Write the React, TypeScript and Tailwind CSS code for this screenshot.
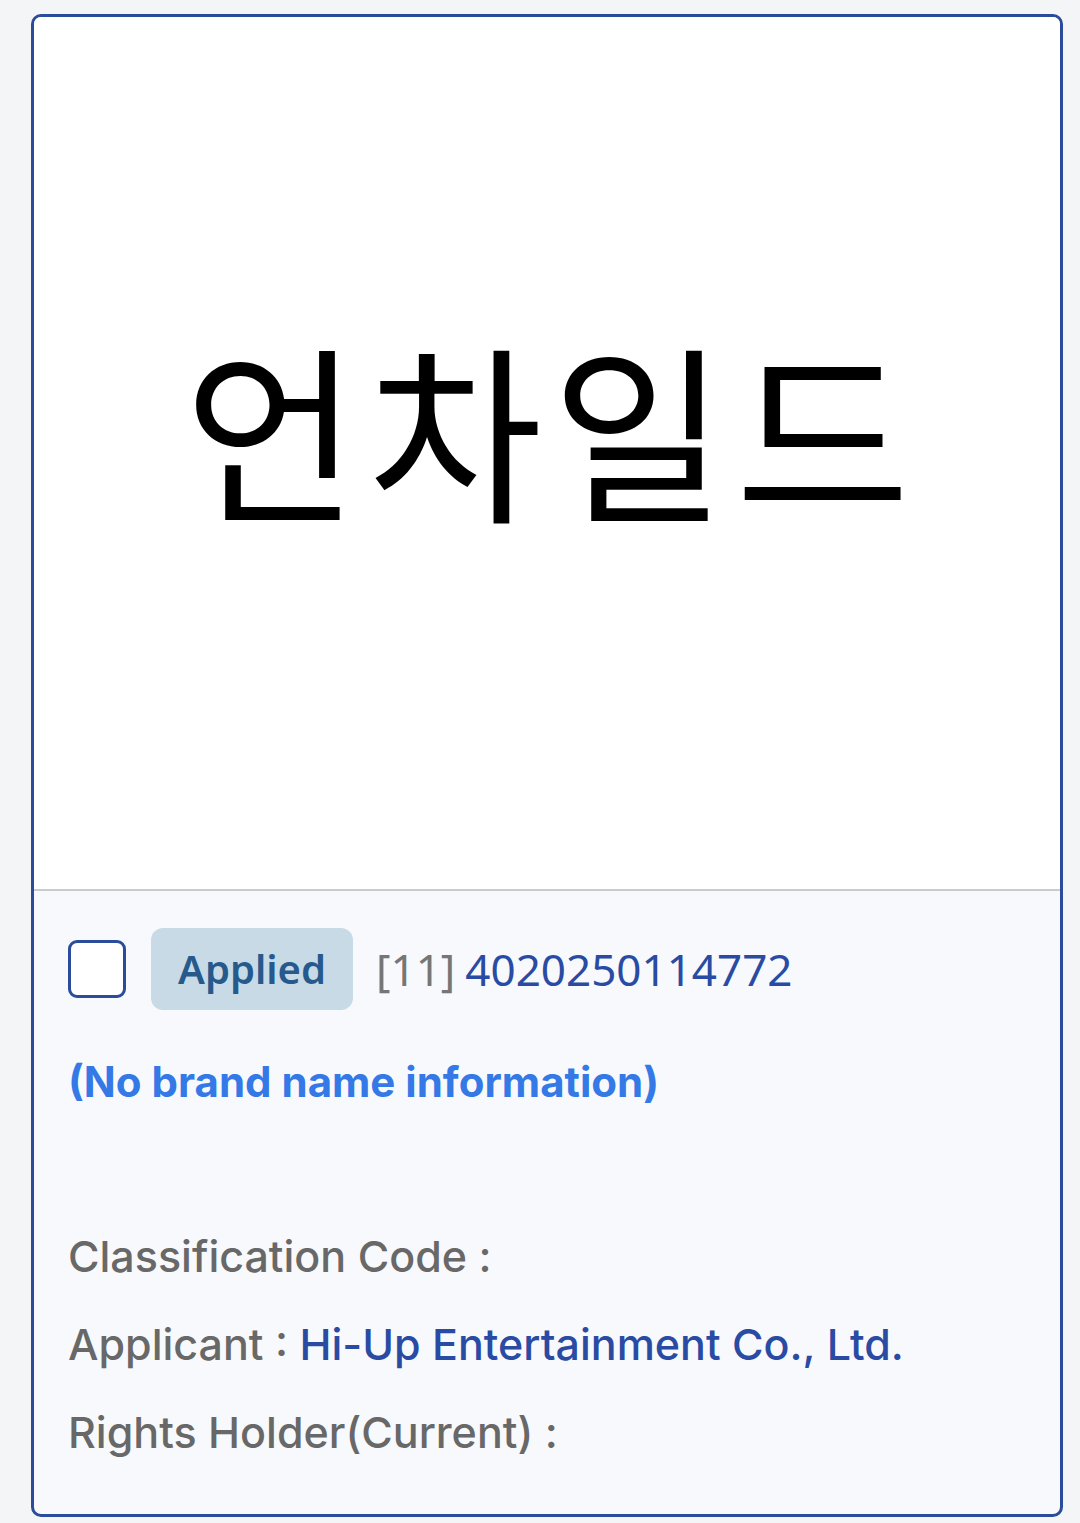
import React from "react";

export default function App() {
  return (
    <div className="min-h-[1523px] w-[1080px] bg-[#f4f5f6] pt-[14px]">
      <div className="ml-[31px] w-[1032px] h-[1503px] rounded-[10px] border-[3px] border-[#2b4c9b] overflow-hidden flex flex-col bg-[#f7f9fc]">
        <div className="h-[874px] bg-white flex items-center justify-center border-b-2 border-[#c9cbce]">
          <span
            className="text-[190px] leading-none text-black tracking-[9px] pl-[9px] -mt-[54px]"
            style={{ fontFamily: '"Noto Sans CJK KR", sans-serif' }}
          >
            언차일드
          </span>
        </div>
        <div
          className="flex flex-col px-[34px] pt-[37px]"
          style={{ fontFamily: 'Inter, "Noto Sans", sans-serif' }}
        >
          <div className="flex items-center h-[82px]">
            <div className="w-[58px] h-[58px] rounded-[9px] border-[3px] border-[#2b4c9b] bg-white" />
            <div
              className="ml-[25px] h-[82px] px-[27px] rounded-[12px] bg-[#c9dae7] flex items-center text-[40px] font-semibold text-[#275a8c]"
              style={{ fontFamily: '"Noto Sans", sans-serif' }}
            >
              Applied
            </div>
            <div
              className="ml-[23px] text-[44px] flex items-center gap-[10px]"
              style={{ fontFamily: '"Noto Sans", sans-serif' }}
            >
              <span className="text-[#767676]">[11]</span>
              <span className="text-[#2a4ba3]">4020250114772</span>
            </div>
          </div>
          <div className="mt-[42px] leading-[60px] text-[42px] font-bold text-[#3479e6]">
            (No brand name information)
          </div>
          <div className="mt-[100px] flex flex-col text-[43px] font-medium text-[#686868]">
            <div className="leading-[88px]">Classification Code :</div>
            <div className="leading-[88px]">
              Applicant : <span className="text-[#2a4ba3]">Hi-Up Entertainment Co., Ltd.</span>
            </div>
            <div className="leading-[88px]">Rights Holder(Current) :</div>
          </div>
        </div>
      </div>
    </div>
  );
}
